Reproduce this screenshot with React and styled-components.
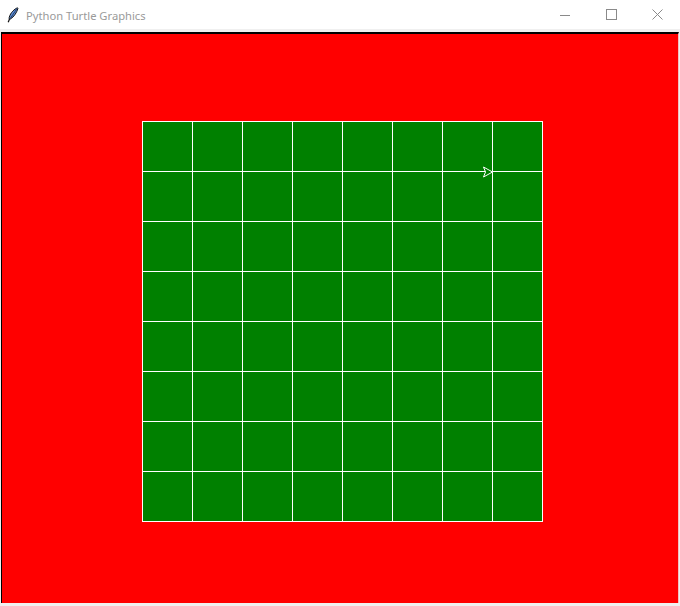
import React from "react";
import styled, { createGlobalStyle } from "styled-components";

const Global = createGlobalStyle`
  html, body { margin: 0; padding: 0; background: #ffffff; }
  body { width: 680px; height: 606px; overflow: hidden; }
`;

const Window = styled.div`
  width: 680px;
  height: 606px;
  display: flex;
  flex-direction: column;
  background: #f0f0f0;
  box-sizing: border-box;
`;

const TitleBar = styled.div`
  height: 29px;
  flex: 0 0 29px;
  background: #ffffff;
  display: flex;
  align-items: center;
`;

const AppIcon = styled.div`
  width: 26px;
  height: 29px;
  display: flex;
  align-items: center;
  justify-content: center;
  padding-left: 0px;
`;

const Title = styled.div`
  flex: 1;
  font-family: "Noto Sans", "Open Sans", sans-serif;
  font-size: 11.2px;
  color: #9a9a9a;
  line-height: 29px;
  margin-top: 1px;
`;

const Controls = styled.div`
  display: flex;
  height: 29px;
  align-self: flex-start;
`;

const ControlButton = styled.div`
  width: 46px;
  height: 29px;
  display: flex;
  align-items: center;
  justify-content: center;
`;

const Body = styled.div`
  flex: 1;
  display: flex;
  padding: 3px 1px 3px 1px;
  min-height: 0;
`;

const Canvas = styled.div`
  flex: 1;
  background: #ff0000;
  border-top: 2px solid #000000;
  border-left: 1px solid #000000;
  border-right: 1px solid #f3c0c0;
  box-sizing: border-box;
  padding: 87px 0 0 140px;
  display: flex;
  align-items: flex-start;
`;

const Board = styled.div`
  position: relative;
  display: grid;
  grid-template-columns: repeat(8, 49px);
  grid-template-rows: repeat(8, 49px);
  gap: 1px;
  padding: 1px;
  background: #ffffff;
`;

const Cell = styled.div`
  background: #008000;
`;

const Turtle = styled.svg`
  position: absolute;
  left: 340px;
  top: 44px;
  overflow: visible;
`;

export default function App() {
  const cells = Array.from({ length: 64 }, (_, i) => <Cell key={i} />);
  return (
    <>
      <Global />
      <Window>
        <TitleBar>
          <AppIcon>
            <svg width="12" height="16" viewBox="0 0 12 16">
              <path
                d="M10.5 0.8 C7.5 2 3.5 5.5 2.2 10.5 C1.9 11.8 2.4 12.4 3.4 12 C7 10 10 5 10.9 1.5 Z"
                fill="#5b8fd8"
                stroke="#111"
                strokeWidth="1"
              />
              <path d="M9.6 2.2 L3.2 11.5" stroke="#1a2a50" strokeWidth="0.8" />
              <path d="M2.6 11.8 L1.2 15.3" stroke="#111" strokeWidth="1.2" />
            </svg>
          </AppIcon>
          <Title>Python Turtle Graphics</Title>
          <Controls>
            <ControlButton>
              <svg width="10" height="10" viewBox="0 0 10 10">
                <path d="M0 5.5 H10" stroke="#8a8a8a" strokeWidth="1" />
              </svg>
            </ControlButton>
            <ControlButton>
              <svg width="11" height="11" viewBox="0 0 11 11">
                <rect x="0.5" y="0.5" width="10" height="10" fill="none" stroke="#8a8a8a" strokeWidth="1" />
              </svg>
            </ControlButton>
            <ControlButton>
              <svg width="11" height="11" viewBox="0 0 11 11">
                <path d="M0.5 0.5 L10.5 10.5 M10.5 0.5 L0.5 10.5" stroke="#8a8a8a" strokeWidth="1" />
              </svg>
            </ControlButton>
          </Controls>
        </TitleBar>
        <Body>
          <Canvas>
            <Board>
              {cells}
              <Turtle width="12" height="14" viewBox="0 0 12 14">
                <polygon
                  points="10.5,7 1.5,2 3.5,7 1.5,12"
                  fill="#008000"
                  stroke="#ffffff"
                  strokeWidth="1"
                />
              </Turtle>
            </Board>
          </Canvas>
        </Body>
      </Window>
    </>
  );
}
